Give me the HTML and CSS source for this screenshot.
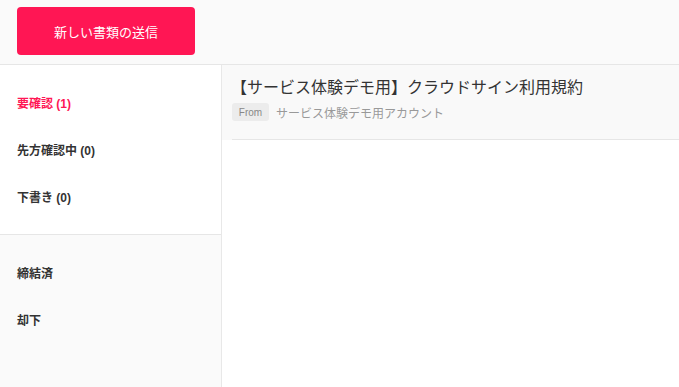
FILE: index.html
```html
<!DOCTYPE html>
<html lang="ja">
<head>
<meta charset="utf-8">
<link rel="stylesheet" href="styles.css">
</head>
<body>
<div class="app">
  <header class="header">
    <button class="send-btn">新しい書類の送信</button>
  </header>
  <div class="body">
    <aside class="sidebar">
      <nav class="group group-top">
        <a class="item active">要確認 (1)</a>
        <a class="item">先方確認中 (0)</a>
        <a class="item">下書き (0)</a>
      </nav>
      <nav class="group group-bottom">
        <a class="item">締結済</a>
        <a class="item">却下</a>
      </nav>
    </aside>
    <main class="main">
      <div class="doc">
        <div class="doc-inner">
          <div class="doc-title">【サービス体験デモ用】クラウドサイン利用規約</div>
          <div class="doc-from">
            <span class="badge">From</span>
            <span class="sender">サービス体験デモ用アカウント</span>
          </div>
        </div>
      </div>
    </main>
  </div>
</div>
</body>
</html>
```
FILE: styles.css
```css
* { box-sizing: border-box; }
html, body { margin: 0; padding: 0; }
body {
  width: 679px;
  height: 387px;
  overflow: hidden;
  font-family: "Liberation Sans", "Noto Sans CJK JP", sans-serif;
  background: #fff;
  color: #333;
}
.app { display: flex; flex-direction: column; height: 387px; }
.header {
  height: 65px;
  background: #fafafa;
  border-bottom: 1px solid #e6e6e6;
  padding: 7px 0 0 17px;
  flex: none;
}
.send-btn {
  width: 178px;
  height: 48px;
  background: #ff1654;
  border: none;
  border-radius: 4px;
  color: #fff;
  font-family: inherit;
  font-size: 13px;
  padding: 0;
}
.body { display: flex; flex: 1; min-height: 0; }
.sidebar {
  width: 222px;
  border-right: 1px solid #e8e8e8;
  display: flex;
  flex-direction: column;
  flex: none;
}
.group { display: flex; flex-direction: column; }
.group-top {
  background: #fff;
  border-bottom: 1px solid #e6e6e6;
  padding: 16px 0 12px;
}
.group-bottom {
  background: #fafafa;
  flex: 1;
  padding: 16px 0 0;
}
.item {
  display: block;
  height: 47px;
  line-height: 47px;
  padding-left: 17px;
  font-size: 12px;
  font-weight: bold;
  color: #333;
}
.item.active { color: #ff1654; }
.main { flex: 1; background: #fff; }
.doc {
  background: #f9f9f9;
  padding: 0 0 0 10px;
}
.doc-inner {
  border-bottom: 1px solid #e6e6e6;
  height: 75px;
  padding-top: 13px;
}
.doc-title {
  font-size: 16px;
  line-height: 20px;
  color: #333;
  margin-left: -1px;
}
.doc-from {
  display: flex;
  align-items: center;
  margin-top: 5px;
}
.badge {
  background: #ececec;
  color: #888;
  font-size: 10px;
  border-radius: 3px;
  width: 37px;
  height: 18px;
  line-height: 19px;
  text-align: center;
}
.sender {
  margin-left: 7px;
  font-size: 12px;
  color: #999;
}
```
